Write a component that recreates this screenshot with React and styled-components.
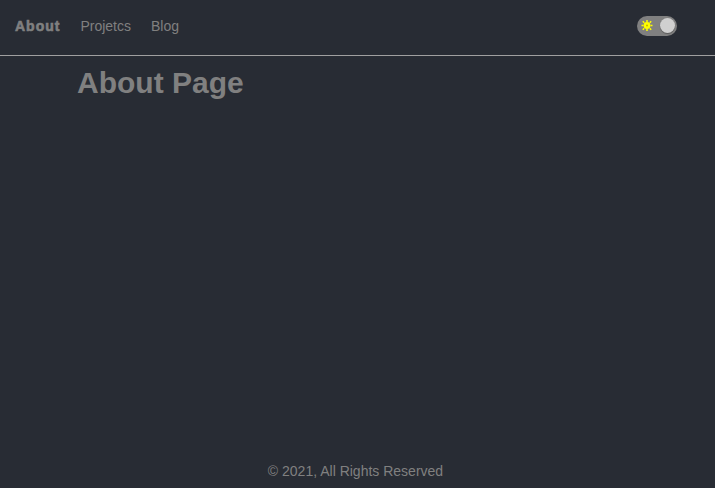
import React, { useState } from 'react';
import styled, { createGlobalStyle } from 'styled-components';

const GlobalStyle = createGlobalStyle`
  html, body {
    margin: 0;
    padding: 0;
    background-color: #282c34;
    font-family: "Liberation Sans", Arial, sans-serif;
    color: #808080;
  }
`;

const Page = styled.div`
  display: flex;
  flex-direction: column;
  height: 488px;
  overflow: hidden;
`;

const Header = styled.header`
  display: flex;
  align-items: center;
  justify-content: space-between;
  height: 51px;
  padding: 0 38px 4px 15px;
  border-bottom: 1px solid #a0a0a0;
  flex-shrink: 0;
`;

const Nav = styled.nav`
  display: flex;
  align-items: center;
  gap: 20px;
`;

const NavLink = styled.a`
  font-size: 14px;
  font-weight: ${({ $active }) => ($active ? 700 : 400)};
  letter-spacing: ${({ $active }) => ($active ? '1px' : '0')};
  -webkit-text-stroke: ${({ $active }) => ($active ? '0.6px #808080' : '0')};
  color: #808080;
  cursor: pointer;
`;

const Toggle = styled.button`
  display: flex;
  align-items: center;
  justify-content: space-between;
  width: 40px;
  height: 20px;
  padding: 0 1px 0 4px;
  border: 0;
  border-radius: 10px;
  background-color: #808080;
  cursor: pointer;
`;

const Knob = styled.span`
  width: 15px;
  height: 15px;
  margin-right: 1px;
  border-radius: 50%;
  background-color: #d0d0d0;
  box-shadow: 0 1px 1px rgba(0, 0, 0, 0.3);
`;

const Main = styled.main`
  flex: 1;
  padding-left: 77px;
`;

const Title = styled.h1`
  margin: 9px 0 0;
  font-size: 30px;
  line-height: 35px;
  font-weight: 700;
`;

const Footer = styled.footer`
  height: 34px;
  padding-right: 4px;
  font-size: 14px;
  line-height: 34px;
  text-align: center;
`;

const SunIcon = () => (
  <svg width="12" height="12" viewBox="0 0 12 12" aria-hidden="true">
    <circle cx="6" cy="5.5" r="3.4" fill="#ffff00" />
    <g stroke="#ffff00" strokeWidth="1.5">
      <line x1="6" y1="0" x2="6" y2="2" />
      <line x1="6" y1="9" x2="6" y2="11" />
      <line x1="0.5" y1="5.5" x2="2.5" y2="5.5" />
      <line x1="9.5" y1="5.5" x2="11.5" y2="5.5" />
      <line x1="1.8" y1="1.3" x2="3.2" y2="2.7" />
      <line x1="8.8" y1="8.3" x2="10.2" y2="9.7" />
      <line x1="1.8" y1="9.7" x2="3.2" y2="8.3" />
      <line x1="8.8" y1="2.7" x2="10.2" y2="1.3" />
    </g>
    <circle cx="6" cy="5.5" r="1" fill="#c8b400" />
  </svg>
);

const App = () => {
  const [active] = useState('About');

  return (
    <React.Fragment>
      <GlobalStyle />
      <Page>
        <Header>
          <Nav>
            {['About', 'Projetcs', 'Blog'].map((item) => (
              <NavLink key={item} $active={item === active}>
                {item}
              </NavLink>
            ))}
          </Nav>
          <Toggle type="button" aria-label="Toggle theme">
            <SunIcon />
            <Knob />
          </Toggle>
        </Header>
        <Main>
          <Title>About Page</Title>
        </Main>
        <Footer>© 2021, All Rights Reserved</Footer>
      </Page>
    </React.Fragment>
  );
};

export default App;
